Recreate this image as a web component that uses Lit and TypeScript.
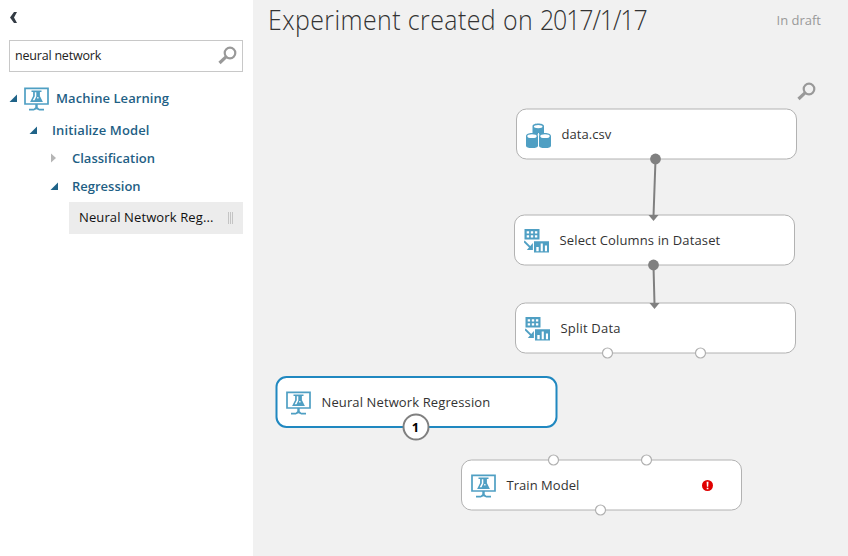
import { LitElement, html, svg, css, nothing } from "lit";
import { customElement, property } from "lit/decorators.js";

type IconName = "lab" | "data" | "transform" | "search";

const icons = {
  lab: svg`<path fill="none" stroke="#4f9fc3" stroke-width="1.700" d="M1 1.300h23v15.700H1z"/>
    <path fill="#4f9fc3" d="M7.500 3.500h10v1.600h-1.600v4l3 5.900H6.100l3-5.900v-4H7.500zM11.300 17h2.400v3.300l1.500 1.500h4.800V23.600h-4.700l-2.800-1.300-2.800 1.300H5v-1.800h4.800l1.500-1.500z"/>
    <path fill="#fff" d="M10.800 5.300h1.500v4.200l-1.800 3.700H8.700l2.100-4zM13.200 10h1.300v1.600h-1.300z"/>`,
  data: svg`<g fill="#4f9fc3"><path d="M6.500 3.200C6.500-.3 18-.3 18 3.200v8.300H6.500zM0 13.200c0-4.200 12-4.200 12 0v9.600c0 3.300-12 3.300-12 0zM13 13.200c0-4.200 12-4.200 12 0v9.600c0 3.300-12 3.300-12 0z"/></g>
    <g fill="#fff"><ellipse cx="12.200" cy="3.600" rx="4.300" ry="1.700"/><ellipse cx="6" cy="13.200" rx="4.700" ry="1.900"/><ellipse cx="19" cy="13.200" rx="4.700" ry="1.900"/></g>
    <path fill="none" stroke="#fff" stroke-width=".9" d="M12.500 10v14.500"/>`,
  transform: svg`<path fill="#4f9fc3" d="M.5 0h15v10.500H.5zM10 12.300h15v11.200H10z"/>
    <path fill="#fff" d="M2.700 2.200h2.400v2.200H2.700zM6.800 2.200h2.400v2.200H6.800zM10.900 2.200h2.400v2.200h-2.400zM2.700 6.200h2.400v2.200H2.700zM6.800 6.200h2.400v2.200H6.800zM10.900 6.200h2.400v2.200h-2.400zM12.300 18h2.400v4.300h-2.400zM16.700 14.500h2.100v7.800h-2.100zM20.900 16.500H23v5.800h-2.100z"/>
    <path fill="none" stroke="#4f9fc3" stroke-width="1.900" d="M0 12.300l7 6.800"/><path fill="#4f9fc3" d="M8.900 14v7H2.800z"/>`,
  search: svg`<circle cx="12" cy="7" r="5.300" fill="none" stroke="#999" stroke-width="2.200"/>
    <path d="M8 10.800L1.500 17" stroke="#999" stroke-width="3.200"/>`,
};

@customElement("ml-icon")
class MlIcon extends LitElement {
  @property() name: IconName = "lab";
  static styles = css`
    :host { display: block; flex: none; }
    svg { display: block; width: 100%; height: 100%; }
  `;
  render() {
    const box = this.name === "search" ? "0 0 19 19" : "0 0 25 25";
    return html`<svg viewBox=${box}>${icons[this.name]}</svg>`;
  }
}

interface Port { x: number; side: "top" | "bottom"; kind: "open" | "filled" | "arrow" | "number"; }
interface Module {
  label: string; icon: IconName; x: number; y: number; spacing: number;
  ports: Port[]; selected?: boolean; error?: boolean;
}

const modules: Module[] = [
  { label: "data.csv", icon: "data", x: 263, y: 109, spacing: 0.05, ports: [{ x: 139.5, side: "bottom", kind: "filled" }] },
  { label: "Select Columns in Dataset", icon: "transform", x: 261, y: 215, spacing: 0.14,
    ports: [{ x: 139.5, side: "top", kind: "arrow" }, { x: 139.5, side: "bottom", kind: "filled" }] },
  { label: "Split Data", icon: "transform", x: 262, y: 303, spacing: 0.2,
    ports: [{ x: 139.5, side: "top", kind: "arrow" }, { x: 92.5, side: "bottom", kind: "open" }, { x: 185.5, side: "bottom", kind: "open" }] },
  { label: "Neural Network Regression", icon: "lab", x: 23, y: 377, spacing: 0.12, selected: true,
    ports: [{ x: 139.5, side: "bottom", kind: "number" }] },
  { label: "Train Model", icon: "lab", x: 208, y: 460, spacing: 0.04, error: true,
    ports: [{ x: 92.5, side: "top", kind: "open" }, { x: 185.5, side: "top", kind: "open" }, { x: 139.5, side: "bottom", kind: "open" }] },
];

@customElement("ml-module")
class MlModule extends LitElement {
  @property({ attribute: false }) module!: Module;
  static styles = css`
    :host { display: block; position: absolute; }
    .card {
      position: relative; box-sizing: border-box; width: 281px; height: 50px;
      display: flex; align-items: center; padding: 0 29px 1px 10px;
    }
    .frame { position: absolute; inset: 0; width: 281px; height: 50px; overflow: visible; fill: #fff; stroke: #b2b2b2; }
    .selected .frame { stroke: #2088c0; stroke-width: 2; }
    ml-icon { position: relative; width: 25px; height: 25px; margin: 4px 10.500px 0 0; }
    .label { position: relative; flex: 1; white-space: nowrap; }
    .error { position: relative; width: 11px; height: 11px; margin-top: 1px; }
    .port { position: absolute; overflow: visible; width: 1px; height: 1px; }
    .top { top: 0; }
    .bottom { top: 50px; }
    .open { fill: #fff; stroke: #b0b0b0; stroke-width: 1.200; }
    .filled, .arrow { fill: #808080; }
    .number {
      top: 50px; transform: translate(-50%, -50%); box-sizing: border-box; border-radius: 50%;
      width: 27px; height: 27px; border: 2px solid #808080; background: #fff; color: #000;
      font: 700 13px/22px "Noto Sans", "Open Sans", sans-serif; text-align: center;
    }
  `;
  port(p: Port) {
    if (p.kind === "number") return html`<span class="port number" style="left:${p.x}px">1</span>`;
    const left = Math.floor(p.x - 0.5);
    return html`<svg class="port ${p.side} ${p.kind}" style="left:${left}px">${
      p.kind === "arrow"
        ? svg`<path d="M-4.500 0h10L.5 6z"/>`
        : svg`<circle cx=".5" cy="0" r=${p.kind === "open" ? 5 : 5.4}/>`
    }</svg>`;
  }
  render() {
    const m = this.module;
    return html`<div class="card ${m.selected ? "selected" : ""}">
      <svg class="frame"><rect x=".5" y="0" width="280" height="50" rx="10"/></svg>
      <ml-icon name=${m.icon}></ml-icon>
      <span class="label" style="letter-spacing:${m.spacing}px">${m.label}</span>
      ${m.error ? html`<svg class="error" viewBox="0 0 11 11"><circle cx="5.500" cy="5.500" r="5.500" fill="#e00000"/>
        <path fill="#fff" d="M4.600 1.800h1.900L6.200 6.800H4.900zM4.700 7.800h1.700v1.500H4.700z"/></svg>` : nothing}
      ${m.ports.map((p) => this.port(p))}
    </div>`;
  }
}

@customElement("app-root")
class AppRoot extends LitElement {
  static styles = css`
    :host {
      display: flex; width: 848px; height: 556px; overflow: hidden; background: #fff;
      font: 13px/20px "Open Sans", "Noto Sans", sans-serif; color: #333;
    }
    .sidebar { flex: none; box-sizing: border-box; width: 253px; padding: 12px 10px 0 9px; display: flex; flex-direction: column; }
    .back { width: 8px; height: 11px; margin-left: 1px; }
    .search {
      box-sizing: border-box; height: 32px; margin-top: 17px; padding: 0 5px 0 5px;
      display: flex; align-items: center; justify-content: space-between; border: 1px solid #c8c8c8;
      font-size: 12.500px; letter-spacing: -.2px; color: #222;
    }
    .search ml-icon, .zoom { width: 19px; height: 19px; }
    .search ml-icon { margin-bottom: 2px; }
    .row { display: flex; align-items: center; height: 28px; font-weight: 600; color: #1f5f85; white-space: nowrap; letter-spacing: .06px; }
    .row svg { width: 8px; height: 10px; flex: none; }
    .root { height: 36px; margin-top: 8px; }
    .root ml-icon { width: 25px; height: 25px; margin: 2px 7px 0 7px; }
    .l1 { padding-left: 20px; letter-spacing: .12px; }
    .l2 { padding-left: 41px; letter-spacing: 0; }
    .l1 svg { margin-right: 15px; }
    .l2 svg { margin-right: 14px; }
    .leaf {
      display: flex; align-items: center; justify-content: space-between; box-sizing: border-box;
      height: 32px; margin: 2px 0 0 60px; padding: 0 9px 2px 10px; background: #ececec; color: #111; letter-spacing: .12px;
    }
    .grip { width: 6px; height: 12px; margin-top: 1px; background: repeating-linear-gradient(90deg, #c4c4c4 0 1px, transparent 1px 2px); }
    .canvas { position: relative; flex: 1; background: #f1f1f1; }
    .head { display: flex; justify-content: space-between; height: 40px; padding: 0 27px 0 15px; }
    h1 {
      margin: 0; font: 300 28px/38px "Open Sans", sans-serif; letter-spacing: .47px; color: #333;
      white-space: nowrap; transform: scaleX(.89); transform-origin: 0 50%;
    }
    .date { letter-spacing: -1.250px; }
    .status { line-height: 40px; color: #999; }
    .zoom { margin: 42px 0 0 544px; }
    .links { position: absolute; inset: 0; width: 595px; height: 556px; }
  `;
  arrow(open: boolean) {
    return open
      ? html`<svg viewBox="0 0 8 10"><path fill="#1f6388" d="M8 1.500V9H.5z"/></svg>`
      : html`<svg viewBox="0 0 8 10"><path fill="#b5b5b5" d="M1 .5l5 4.500-5 4.500z"/></svg>`;
  }
  render() {
    return html`
      <aside class="sidebar">
        <svg class="back" viewBox="0 0 8 11"><path fill="#333b44" d="M4 0h3L4 5.500 7 11H4L0 5.500z"/></svg>
        <div class="search"><span>neural network</span><ml-icon name="search"></ml-icon></div>
        <div class="row root">${this.arrow(true)}<ml-icon name="lab"></ml-icon><span>Machine Learning</span></div>
        <div class="row l1">${this.arrow(true)}<span>Initialize Model</span></div>
        <div class="row l2">${this.arrow(false)}<span>Classification</span></div>
        <div class="row l2">${this.arrow(true)}<span>Regression</span></div>
        <div class="leaf"><span>Neural Network Reg...</span><span class="grip"></span></div>
      </aside>
      <main class="canvas">
        <header class="head"><h1>Experiment created on <span class="date">2017/1/17</span></h1><span class="status">In draft</span></header>
        <ml-icon class="zoom" name="search"></ml-icon>
        ${modules.map((m) => html`<ml-module .module=${m} style="left:${m.x}px;top:${m.y}px"></ml-module>`)}
        <svg class="links" viewBox="0 0 595 556"><path fill="none" stroke="#808080" stroke-width="2" d="M402.500 160L400.500 216M400.500 266L401.500 304"/></svg>
      </main>`;
  }
}
